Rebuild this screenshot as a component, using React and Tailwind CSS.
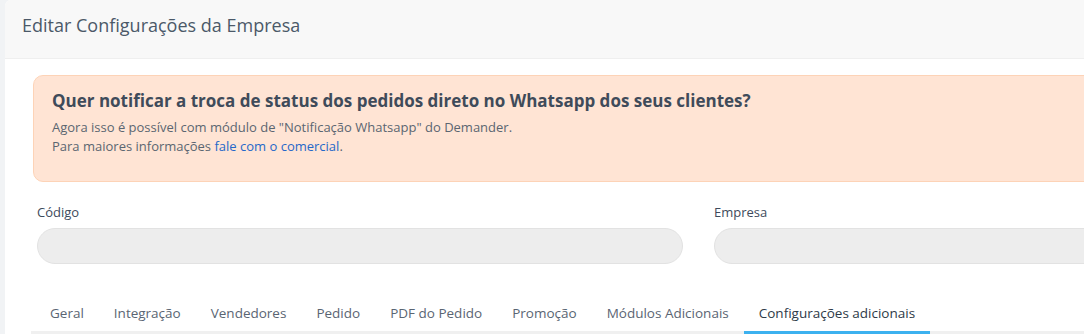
export default function App() {
  const tabs = ["Geral", "Integração", "Vendedores", "Pedido", "PDF do Pedido", "Promoção", "Módulos Adicionais", "Configurações adicionais"];
  return (
    <div className="w-[1084px] h-[334px] overflow-hidden bg-[#f1f3f5] pl-[5px] font-['Open_Sans',sans-serif]">
      <div className="w-[1100px] h-full bg-white rounded-tl-[6px] overflow-hidden">
        <div className="h-[59px] bg-[#f8f8f8] border-b border-[#efefef] pl-[17px] pt-[12px]">
          <h1 className="text-[18px] leading-[26px] text-[#4b5968]">Editar Configurações da Empresa</h1>
        </div>
        <div className="pl-[28px] pt-[16px]">
          <div className="h-[107px] bg-[#ffe4d4] border border-[#fdd3b7] rounded-l-[10px] pl-[18px] pt-[13px]">
            <p className="text-[17px] font-bold text-[#3f4b5a] leading-[24px]">Quer notificar a troca de status dos pedidos direto no Whatsapp dos seus clientes?</p>
            <p className="text-[13px] text-[#5b6671] leading-[19px] mt-[5px]">Agora isso é possível com módulo de "Notificação Whatsapp" do Demander.</p>
            <p className="text-[13px] text-[#5b6671] leading-[19px]">Para maiores informações <span className="text-[#2668c9]">fale com o comercial</span>.</p>
          </div>
          <div className="flex pt-[22px] pl-[4px]">
            <div className="w-[646px] shrink-0">
              <label className="block text-[13px] text-[#3d4a5c] leading-[16px]">Código</label>
              <div className="mt-[8px] h-[36px] rounded-full bg-[#ededed] border border-[#e2e2e2]"></div>
            </div>
            <div className="ml-[31px] w-[400px] shrink-0">
              <label className="block text-[13px] text-[#3d4a5c] leading-[16px]">Empresa</label>
              <div className="mt-[8px] h-[36px] rounded-full bg-[#ededed] border border-[#e2e2e2]"></div>
            </div>
          </div>
          <div className="mt-[25px] flex border-b-[3px] border-[#f0f0f0] w-[1060px] ml-[-2px] pl-[4px]">
            {tabs.map((t, i) => (
              <div key={t} className={`px-[15px] pt-[14px] pb-[8px] leading-[20px] text-[13.5px] -mb-[3px] border-b-[3px] ${i === tabs.length - 1 ? "border-[#3cb1ef] text-[#2e3a48]" : "border-transparent text-[#5a6573]"}`}>{t}</div>
            ))}
          </div>
        </div>
      </div>
    </div>
  );
}
